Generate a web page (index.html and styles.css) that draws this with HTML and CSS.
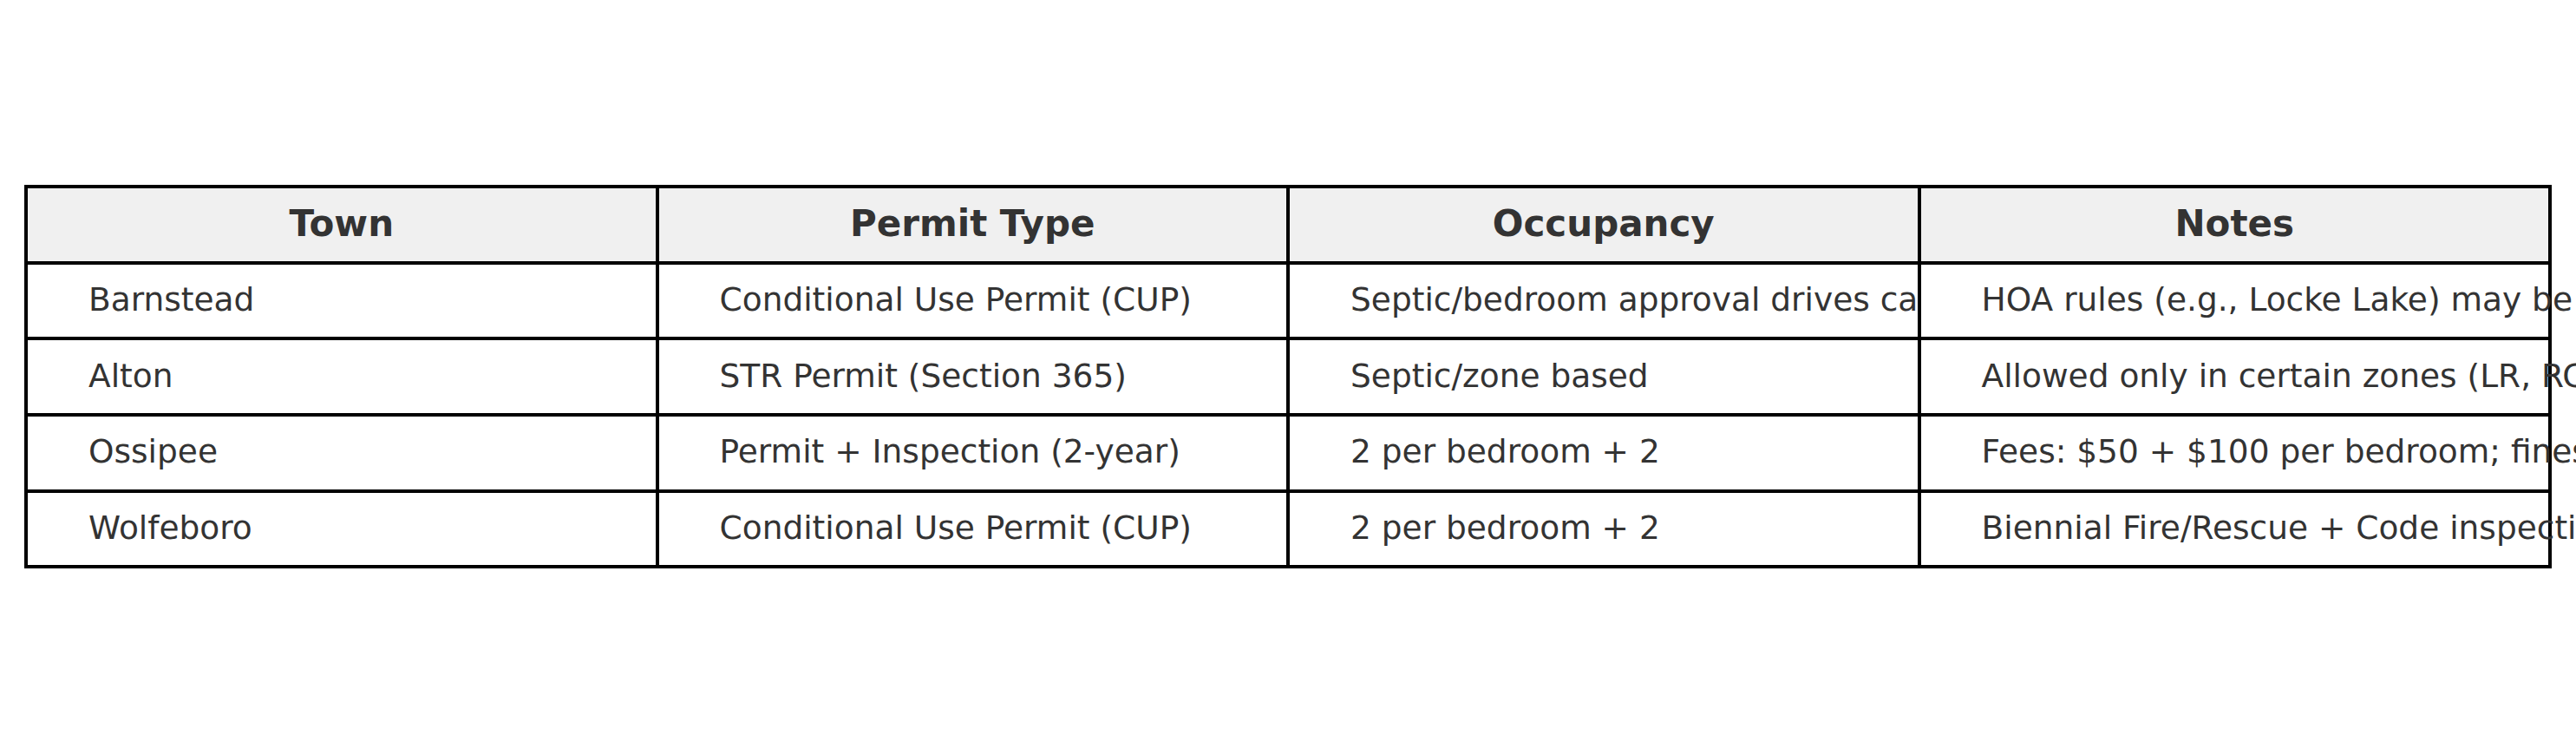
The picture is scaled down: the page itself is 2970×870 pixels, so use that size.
FILE: index.html
```html
<!DOCTYPE html>
<html lang="en">
<head>
<meta charset="utf-8">
<title>STR Permits by Town</title>
<link rel="stylesheet" href="styles.css">
</head>
<body>
<div class="table">
  <div class="cell head">Town</div>
  <div class="cell head">Permit Type</div>
  <div class="cell head">Occupancy</div>
  <div class="cell head">Notes</div>

  <div class="cell">Barnstead</div>
  <div class="cell">Conditional Use Permit (CUP)</div>
  <div class="cell">Septic/bedroom approval drives capacity</div>
  <div class="cell last">HOA rules (e.g., Locke Lake) may be stricter</div>

  <div class="cell">Alton</div>
  <div class="cell">STR Permit (Section 365)</div>
  <div class="cell">Septic/zone based</div>
  <div class="cell last">Allowed only in certain zones (LR, RC, RR)</div>

  <div class="cell">Ossipee</div>
  <div class="cell">Permit + Inspection (2-year)</div>
  <div class="cell">2 per bedroom + 2</div>
  <div class="cell last">Fees: $50 + $100 per bedroom; fines apply</div>

  <div class="cell">Wolfeboro</div>
  <div class="cell">Conditional Use Permit (CUP)</div>
  <div class="cell">2 per bedroom + 2</div>
  <div class="cell last">Biennial Fire/Rescue + Code inspections</div>
</div>
</body>
</html>
```

FILE: styles.css
```css
html {
  overflow: hidden;
  background: #ffffff;
}

body {
  margin: 0;
  font-family: "DejaVu Sans", "Liberation Sans", sans-serif;
  color: #333333;
}

.table {
  display: grid;
  grid-template-columns: repeat(4, 727.5px);
  grid-auto-rows: 87.7px;
  width: max-content;
  margin: 213px 0 0 28px;
  border-left: 4px solid #000000;
  border-top: 4px solid #000000;
}

.cell {
  display: flex;
  align-items: center;
  box-sizing: border-box;
  border-right: 4px solid #000000;
  border-bottom: 4px solid #000000;
  padding: 0 0 3px 70px;
  font-size: 37.5px;
  white-space: nowrap;
  overflow: hidden;
  background: #ffffff;
}

.cell.last {
  overflow: visible;
}

.cell.head {
  justify-content: center;
  padding: 0 0 3px 0;
  font-size: 42px;
  font-weight: bold;
  background: #f0f0f0;
}
```
